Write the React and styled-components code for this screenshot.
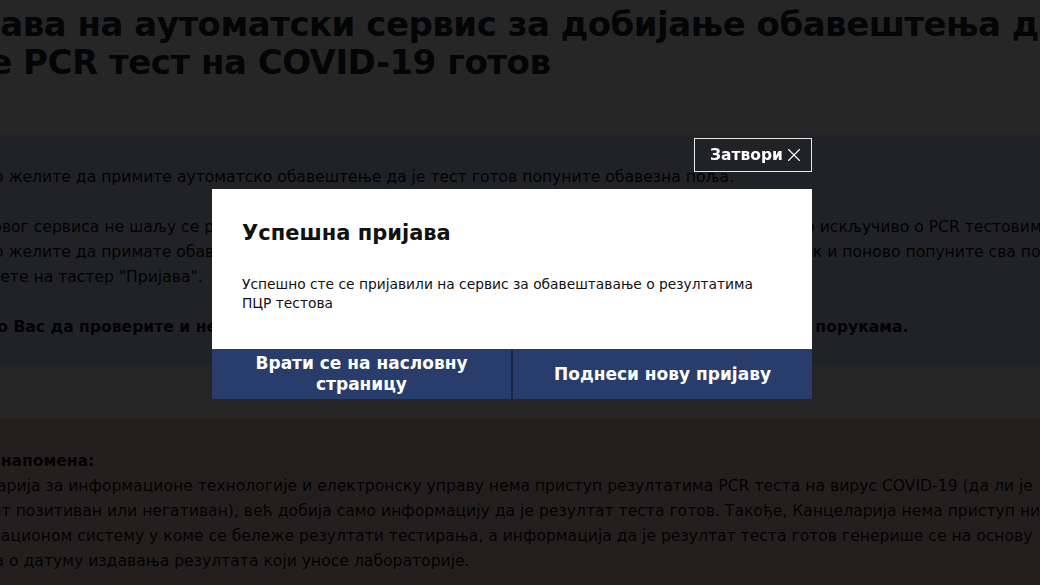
import styled, { createGlobalStyle } from "styled-components";
import { X } from "lucide-react";

const GlobalStyle = createGlobalStyle`
  html, body {
    margin: 0;
    padding: 0;
    background: #ffffff;
    overflow: hidden;
    height: 100%;
  }
  body {
    font-family: "DejaVu Sans", "Noto Sans", sans-serif;
  }
`;

const Page = styled.div`
  margin-left: -64px;
  width: 1260px;
  color: #101010;
`;

const Header = styled.header`
  height: 135px;
  padding-top: 5px;
  box-sizing: border-box;
`;

const Title = styled.h1`
  margin: 0 0 0 42px;
  text-indent: -64px;
  font: 700 34px/38px "DejaVu Sans", sans-serif;
  color: #1a2233;
  white-space: nowrap;
  letter-spacing: -0.5px;
`;

const InfoBox = styled.section`
  background: #dde5f5;
  padding: 30px 0 27px;
  height: 230px;
  box-sizing: border-box;
`;

const Para = styled.p`
  margin: 0 0 25px;
  font-size: 15.6px;
  line-height: 25px;
  white-space: nowrap;
  font-weight: ${(p) => (p.bold ? 700 : 400)};
  &:last-child {
    margin-bottom: 0;
  }
`;

const Spacer = styled.div`
  height: 53px;
`;

const NoteBox = styled.section`
  background: #f6cbcf;
  padding: 31px 0 40px;
  height: 200px;
  box-sizing: border-box;
`;

const NoteTitle = styled.div`
  font-weight: 700;
  font-size: 15.6px;
  line-height: 25px;
`;

const NoteText = styled.div`
  font-size: 15.6px;
  line-height: 25px;
  white-space: nowrap;
`;

const Overlay = styled.div`
  position: fixed;
  inset: 0;
  background: rgba(0, 0, 0, 0.85);
  display: flex;
  justify-content: center;
  padding: 138px 16px 0 0;
  box-sizing: border-box;
`;

const Dialog = styled.div`
  width: 600px;
  display: flex;
  flex-direction: column;
  align-items: flex-end;
`;

const CloseButton = styled.button`
  display: flex;
  align-items: center;
  gap: 0;
  width: 118px;
  height: 34px;
  padding: 0 0 0 15px;
  margin-bottom: 17px;
  background: transparent;
  border: 1px solid #e8e8e8;
  color: #ffffff;
  font: 700 15.5px "DejaVu Sans", sans-serif;
  cursor: pointer;
`;

const ModalBody = styled.div`
  align-self: stretch;
  background: #ffffff;
  height: 160px;
  padding: 31px 30px 0;
  box-sizing: border-box;
`;

const ModalTitle = styled.h2`
  margin: 0 0 29px;
  font: 700 21px/26px "DejaVu Sans", sans-serif;
  color: #111111;
`;

const ModalText = styled.p`
  margin: 0;
  font-size: 13.8px;
  line-height: 19px;
  color: #111111;
`;

const Actions = styled.div`
  align-self: stretch;
  display: grid;
  grid-template-columns: 1fr 1fr;
  gap: 2px;
  background: #1a2744;
  height: 50px;
`;

const ActionButton = styled.button`
  background: #283d6b;
  border: 0;
  color: #ffffff;
  font: 700 17px/21px "DejaVu Sans", sans-serif;
  padding: 0 40px;
  cursor: pointer;
`;

function App() {
  return (
    <>
      <GlobalStyle />
      <Page>
        <Header>
          <Title>
            Пријава на аутоматски сервис за добијање обавештења да
            <br />
            је PCR тест на COVID-19 готов
          </Title>
        </Header>

        <InfoBox>
          <Para>Уколико желите да примите аутоматско обавештење да је тест готов попуните обавезна поља.</Para>
          <Para>
            Путем овог сервиса не шаљу се резултати тестова, већ само обавештење да је резултат теста готов и то искључиво о PCR тестовима.
            <br />
            Уколико желите да примате обавештења за више особа, потребно је да се увек вратите на почетни корак и поново попуните сва поља
            <br />
            и кликнете на тастер "Пријава".
          </Para>
          <Para bold>Молимо Вас да проверите и нежељену пошту уколико обавештење не видите међу пристиглим порукама.</Para>
        </InfoBox>

        <Spacer />

        <NoteBox>
          <NoteTitle>Важна напомена:</NoteTitle>
          <NoteText>Канцеларија за информационе технологије и електронску управу нема приступ резултатима PCR теста на вирус COVID-19 (да ли је</NoteText>
          <NoteText>резултат позитиван или негативан), већ добија само информацију да је резултат теста готов. Такође, Канцеларија нема приступ ни</NoteText>
          <NoteText>информационом систему у коме се бележе резултати тестирања, а информација да је резултат теста готов генерише се на основу</NoteText>
          <NoteText>податка о датуму издавања резултата који уносе лабораторије.</NoteText>
        </NoteBox>
      </Page>

      <Overlay>
        <Dialog>
          <CloseButton>
            Затвори <X size={22} strokeWidth={1.2} />
          </CloseButton>
          <ModalBody>
            <ModalTitle>Успешна пријава</ModalTitle>
            <ModalText>
              Успешно сте се пријавили на сервис за обавештавање о резултатима
              <br />
              ПЦР тестова
            </ModalText>
          </ModalBody>
          <Actions>
            <ActionButton>Врати се на насловну страницу</ActionButton>
            <ActionButton>Поднеси нову пријаву</ActionButton>
          </Actions>
        </Dialog>
      </Overlay>
    </>
  );
}

export default App;
